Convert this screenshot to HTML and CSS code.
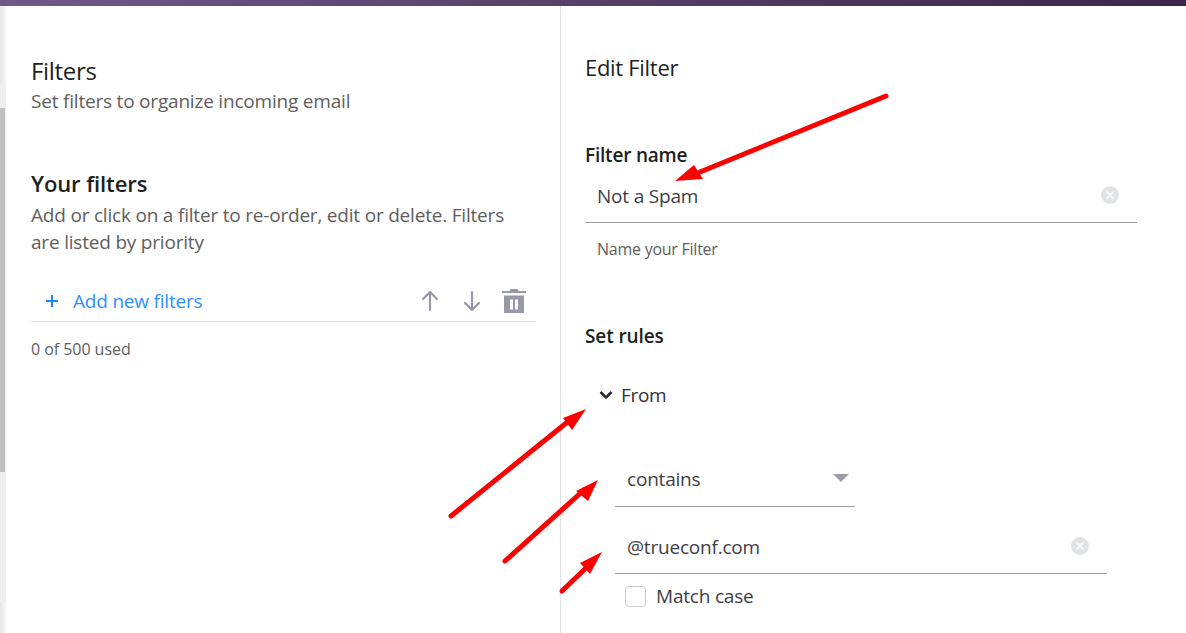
FILE: index.html
```html
<!DOCTYPE html>
<html lang="en">
<head>
<meta charset="utf-8">
<title>Filters</title>
<link rel="stylesheet" href="styles.css">
</head>
<body>
<div class="topbar"></div>
<div class="main">
  <div class="rail"><div class="rail-top"></div><div class="rail-track"><div class="rail-thumb"></div></div><div class="rail-bottom"></div></div>
  <section class="list-pane">
    <h1 class="title">Filters</h1>
    <p class="subtitle">Set filters to organize incoming email</p>
    <h2 class="section-title">Your filters</h2>
    <p class="section-desc">Add or click on a filter to re-order, edit or delete. Filters are listed by priority</p>
    <div class="toolbar">
      <button class="add-btn"><svg class="plus" viewBox="0 0 14 14"><path d="M7 1v12M1 7h12"/></svg><span>Add new filters</span></button>
      <div class="tools">
        <svg class="tool" viewBox="0 0 20 24"><path d="M10 21V3M3 10 10 3l7 7"/></svg>
        <svg class="tool" viewBox="0 0 20 24"><path d="M10 3v18M3 14l7 7 7-7"/></svg>
        <svg class="trash" viewBox="0 0 24 24"><path d="M8.500 0h7l1 2H24v2H0V2h7.500zM2 6.500h20V24H2zm6 4v10h3v-10zm5 0v10h3v-10z" fill-rule="evenodd"/></svg>
      </div>
    </div>
    <p class="usage">0 of 500 used</p>
  </section>
  <section class="edit-pane">
    <h2 class="edit-title">Edit Filter</h2>
    <label class="field-label">Filter name</label>
    <div class="field name-field"><span>Not a Spam</span><span class="clear"><svg viewBox="0 0 18 18"><path d="M5.500 5.500l7 7M12.500 5.500l-7 7"/></svg></span></div>
    <p class="hint">Name your Filter</p>
    <h3 class="rules-title">Set rules</h3>
    <div class="rule-head"><svg class="chev" viewBox="0 0 14 10"><path d="M1.500 2 7 7.500 12.500 2"/></svg><span>From</span></div>
    <div class="rule-body">
      <div class="field select-field"><span>contains</span><span class="caret"></span></div>
      <div class="field value-field"><span>@trueconf.com</span><span class="clear"><svg viewBox="0 0 18 18"><path d="M5.500 5.500l7 7M12.500 5.500l-7 7"/></svg></span></div>
      <div class="check-row"><span class="checkbox"></span><span>Match case</span></div>
    </div>
  </section>
</div>
<svg class="arrows" viewBox="0 0 1186 633">
  <g class="arrow-line">
    <path d="M886 96 700 172"/>
    <path d="M451 516 570 420"/>
    <path d="M505 561 584 490"/>
    <path d="M562 591 588 566"/>
  </g>
  <g class="arrow-head">
    <path d="M675 181 694 165 703 179z"/>
    <path d="M586 409 563 418 572 430z"/>
    <path d="M598 480 576 491 588 501z"/>
    <path d="M602 552 580 563 590 574z"/>
  </g>
</svg>
</body>
</html>
```
FILE: styles.css
```css
* { box-sizing: border-box; }
html, body { margin: 0; height: 100%; overflow: hidden; background: #fff; }
body { font-family: "Open Sans", "Noto Sans", sans-serif; color: #201f1e; position: relative; }
h1, h2, h3, p { margin: 0; font-weight: 400; }
.topbar { height: 6px; background: linear-gradient(90deg, #6e5a86 0%, #4f3c64 60%, #392848 100%); }
.main { display: flex; height: 627px; }
.rail { width: 6px; display: flex; flex-direction: column; flex: none; }
.rail-top { height: 78px; background: linear-gradient(90deg, #e6e6e8, #f6f6f7); }
.rail-track { height: 518px; background: #efefef; padding-top: 24px; }
.rail-thumb { width: 5px; height: 364px; background: #c0c0c0; }
.rail-bottom { flex: 1; background: linear-gradient(90deg, #e6e6e8, #f6f6f7); }
.list-pane { width: 555px; flex: none; border-right: 1px solid #e1e3e8; padding: 52px 24px 0 25px; }
.title { font-size: 24px; line-height: 26px; letter-spacing: -0.3px; }
.subtitle { font-size: 19px; line-height: 24px; margin-top: 5px; color: #605e5c; letter-spacing: -0.2px; }
.section-title { font-size: 22px; font-weight: 600; line-height: 26px; margin-top: 57px; letter-spacing: -0.1px; }
.section-desc { font-size: 19px; line-height: 27px; margin-top: 6px; color: #605e5c; letter-spacing: -0.2px; }
.toolbar { display: flex; align-items: center; justify-content: space-between; height: 42px; margin-top: 24px; border-bottom: 1px solid #e1e1e1; }
.add-btn { display: flex; align-items: center; gap: 14px; padding: 0 0 0 14px; border: 0; background: none; font: inherit; font-size: 19px; color: #2f8fff; letter-spacing: -0.2px; }
.plus { width: 14px; height: 14px; fill: none; stroke: #1e88f5; stroke-width: 2; }
.tools { display: flex; align-items: center; gap: 22px; padding-right: 10px; }
.tool { width: 20px; height: 24px; fill: none; stroke: #9799a8; stroke-width: 2.200; stroke-linecap: round; stroke-linejoin: round; }
.trash { width: 24px; height: 24px; fill: #9799a8; margin-left: -2px; }
.usage { font-size: 16px; line-height: 22px; margin-top: 16px; color: #605e5c; letter-spacing: -0.05px; }
.edit-pane { flex: 1; min-width: 0; padding: 47px 49px 0 24px; }
.edit-title { font-size: 22px; line-height: 28px; letter-spacing: -0.3px; }
.field-label { display: block; font-size: 19px; font-weight: 600; line-height: 24px; margin-top: 62px; letter-spacing: -0.2px; }
.field { display: flex; align-items: center; justify-content: space-between; border-bottom: 1px solid #9c9ca8; font-size: 19px; color: #3e3d45; letter-spacing: -0.2px; }
.name-field { height: 53px; margin-top: 3px; padding: 0 18px 1px 12px; }
.clear { display: flex; width: 18px; height: 18px; margin-top: -2px; background: #e1e3e8; border-radius: 50%; }
.clear svg { width: 18px; height: 18px; fill: none; stroke: #fff; stroke-width: 1.500; }
.hint { font-size: 16px; line-height: 20px; padding-left: 12px; margin-top: 16px; color: #605e5c; letter-spacing: -0.25px; }
.rules-title { font-size: 19px; font-weight: 600; line-height: 24px; margin-top: 65px; letter-spacing: -0.1px; }
.rule-head { display: flex; align-items: center; gap: 8px; font-size: 19px; line-height: 24px; margin-top: 35px; padding-left: 14px; color: #33323a; letter-spacing: -0.3px; }
.chev { width: 14px; height: 10px; fill: none; stroke: #2a2a33; stroke-width: 2.500; }
.rule-body { padding-left: 30px; margin-top: 47px; }
.select-field { width: 240px; height: 53px; padding: 0 6px 2px 12px; }
.caret { width: 0; height: 0; border-left: 8px solid transparent; border-right: 8px solid transparent; border-top: 8px solid #9c9ca8; margin-bottom: 3px; }
.value-field { width: 492px; height: 67px; padding: 14px 18px 0 12px; }
.check-row { display: flex; align-items: center; gap: 10px; margin-top: 10px; padding-left: 10px; font-size: 19px; line-height: 24px; color: #3e3d45; letter-spacing: -0.2px; }
.checkbox { width: 21px; height: 21px; border: 1.500px solid #c8cad6; border-radius: 4px; }
.arrows { position: absolute; left: 0; top: 0; width: 1186px; height: 633px; pointer-events: none; }
.arrow-line path { fill: none; stroke: #fe0000; stroke-width: 5; stroke-linecap: round; }
.arrow-head path { fill: #fe0000; }
```
